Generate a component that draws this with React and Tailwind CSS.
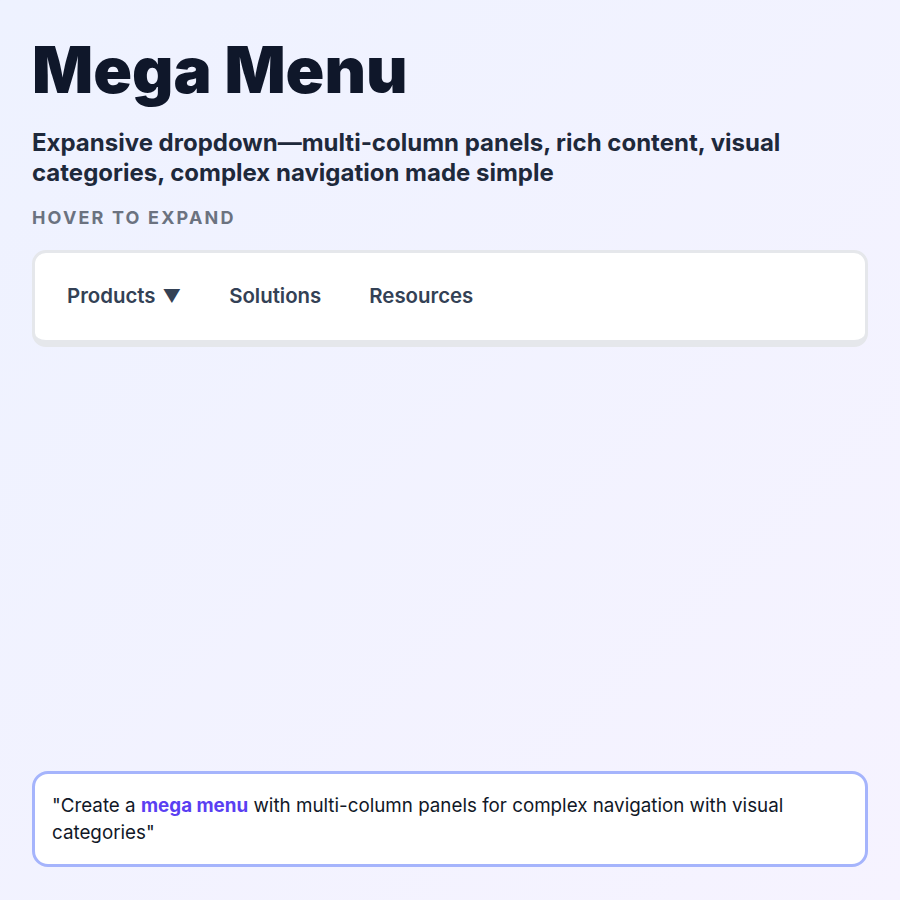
export default function App() {
  const items = ["Products", "Solutions", "Resources"];

  return (
    <div
      className="flex min-h-screen flex-col bg-gradient-to-br from-[#eef2ff] to-[#f6f3ff] px-8 pt-8 pb-[33px]"
      style={{ fontFamily: "Inter, 'Noto Sans', sans-serif" }}
    >
      <h1 className="text-[64px] font-black leading-[1.2] text-[#0f172a]">
        Mega Menu
      </h1>
      <p className="mt-[19px] text-[24px] font-bold leading-[30px] text-[#1e293b]">
        Expansive dropdown—multi-column panels, rich content, visual categories,
        complex navigation made simple
      </p>
      <p className="mt-4 text-[18px] font-bold uppercase leading-[27px] tracking-[0.12em] text-[#6b7280]">
        Hover to expand
      </p>

      <nav className="mt-[19px] rounded-[14px] border-[3px] border-b-[7px] border-[#e5e7eb] bg-white px-8">
        <ul className="flex h-[87px] items-center gap-12">
          {items.map((label, i) => (
            <li
              key={label}
              className="flex items-center gap-[7px] text-[20.4px] font-semibold text-[#334155]"
            >
              {label}
              {i === 0 && <span className="text-[18px]">▼</span>}
            </li>
          ))}
        </ul>
      </nav>

      <div className="mt-auto rounded-[16px] border-[3px] border-[#a5b4fc] bg-white px-[17px] py-[18px] text-[18.8px] leading-[27px] text-[#111827]">
        "Create a <span className="font-bold text-[#5a3ff2]">mega menu</span>{" "}
        with multi-column panels for complex navigation with visual categories"
      </div>
    </div>
  );
}
